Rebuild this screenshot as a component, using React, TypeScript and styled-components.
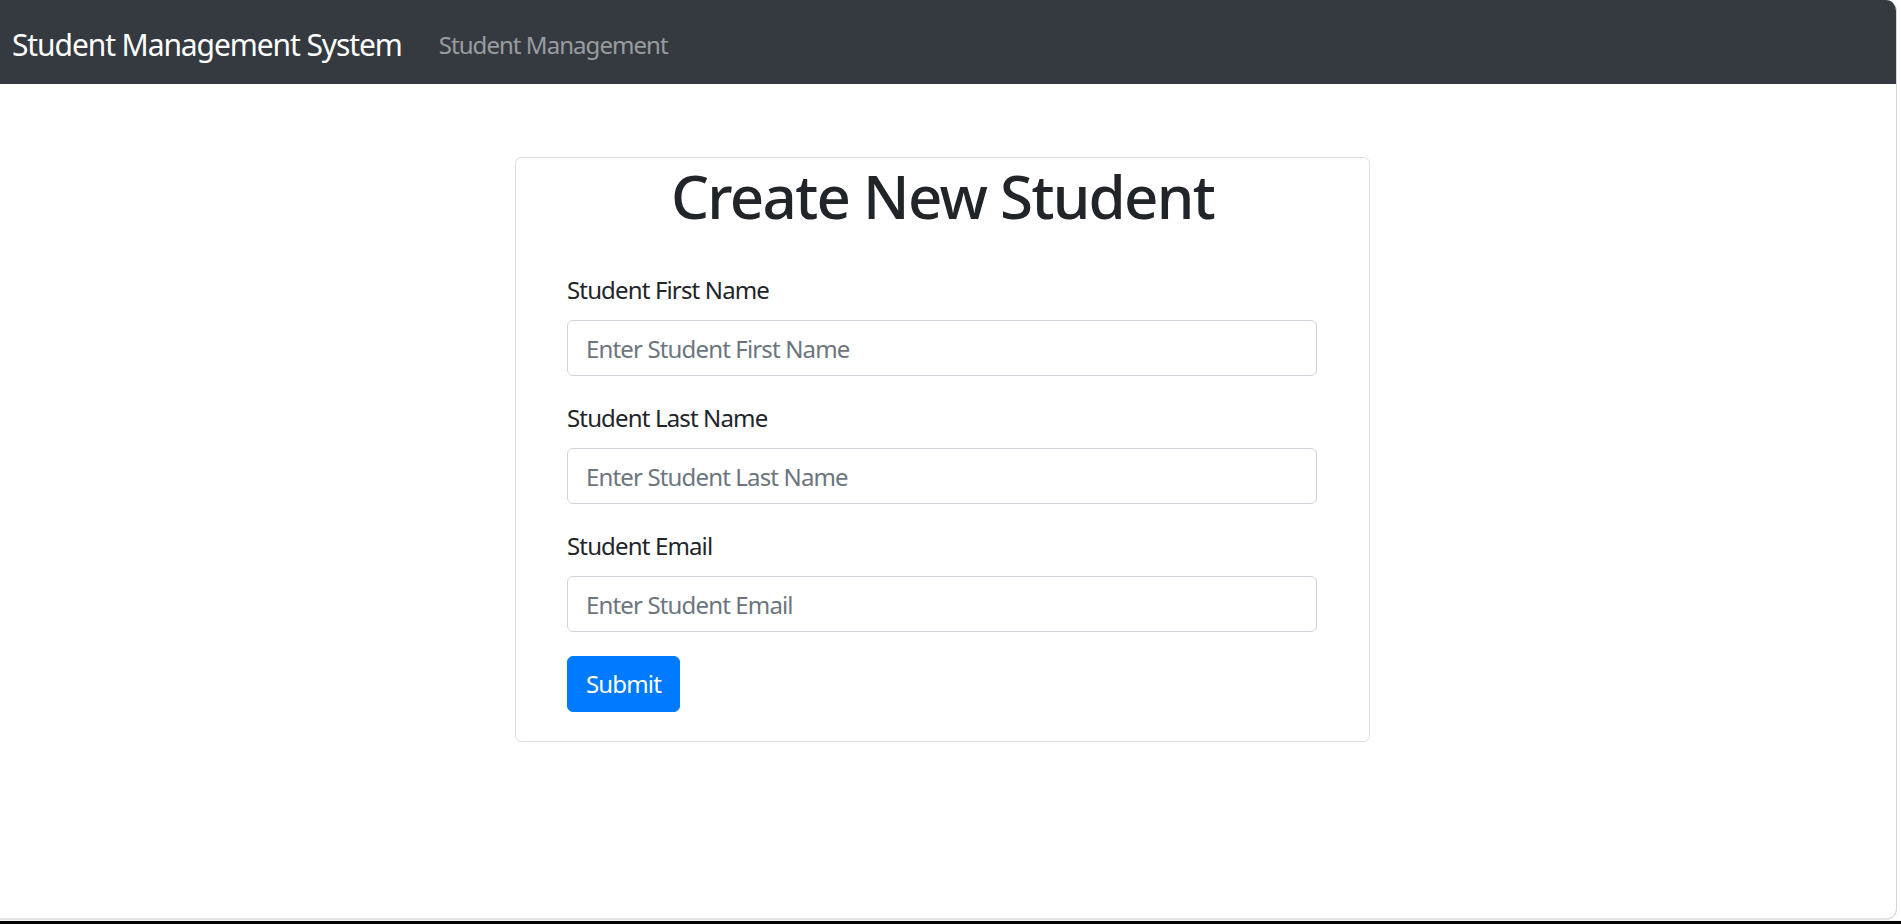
import React from "react";
import styled, { createGlobalStyle } from "styled-components";

const Global = createGlobalStyle`
  html, body { margin: 0; padding: 0; background: #ffffff; }
  body { font-family: "Segoe UI", "Noto Sans", "Liberation Sans", sans-serif; color: #212529; }
  * { box-sizing: border-box; }
`;

const Screen = styled.div`
  width: 1901px;
  height: 924px;
  display: flex;
  flex-direction: column;
  overflow: hidden;
  background: #ffffff;
`;

const Window = styled.div`
  width: 1897px;
  height: 920px;
  display: flex;
  flex-direction: column;
  border-right: 1px solid #d6d6d6;
  border-bottom: 2px solid #e2e2e2;
  border-radius: 0 11px 11px 0;
  overflow: hidden;
  background: #ffffff;
`;

const Taskbar = styled.div`
  height: 4px;
  background: linear-gradient(#f4f4f4 0 1px, #000000 1px);
`;

const Navbar = styled.nav`
  height: 84px;
  flex: none;
  background: #343a40;
  display: flex;
  align-items: center;
  padding: 5px 0 0 12px;
`;

const Brand = styled.a`
  font-size: 30px;
  line-height: 45px;
  color: #ffffff;
  margin-right: 37px;
  white-space: nowrap;
  letter-spacing: -1.1px;
`;

const NavLink = styled.a`
  font-size: 24px;
  line-height: 36px;
  color: rgba(255, 255, 255, 0.5);
  white-space: nowrap;
  letter-spacing: -0.95px;
`;

const Main = styled.main`
  padding: 73px 0 0 515px;
`;

const Card = styled.div`
  width: 855px;
  border: 1px solid rgba(0, 0, 0, 0.125);
  border-radius: 6px;
  display: flex;
  flex-direction: column;
`;

const Title = styled.h1`
  margin: 2px 0 12px;
  font-size: 60px;
  font-weight: 500;
  line-height: 72px;
  text-align: center;
  color: #212529;
  letter-spacing: -1.7px;
`;

const Body = styled.form`
  padding: 28px 51px 29px;
  display: flex;
  flex-direction: column;
`;

const Group = styled.div`
  display: flex;
  flex-direction: column;
  margin-bottom: 24px;
`;

const Label = styled.label`
  font-size: 24px;
  line-height: 36px;
  color: #212529;
  margin-bottom: 12px;
  letter-spacing: -0.85px;
`;

const Input = styled.input`
  width: 750px;
  height: 56px;
  padding: 9px 18px;
  font-family: inherit;
  font-size: 24px;
  line-height: 36px;
  color: #495057;
  background: #ffffff;
  border: 1px solid #ced4da;
  border-radius: 6px;
  outline: none;
  letter-spacing: -0.85px;
  &::placeholder { color: #6c757d; opacity: 1; }
`;

const Button = styled.button`
  align-self: flex-start;
  height: 56px;
  padding: 9px 18px;
  font-family: inherit;
  font-size: 24px;
  line-height: 36px;
  color: #ffffff;
  background: #007bff;
  border: 1px solid #007bff;
  border-radius: 6px;
  letter-spacing: -0.85px;
  cursor: pointer;
`;

const fields = [
  { label: "Student First Name", placeholder: "Enter Student First Name" },
  { label: "Student Last Name", placeholder: "Enter Student Last Name" },
  { label: "Student Email", placeholder: "Enter Student Email" },
];

export default function App() {
  return (
    <>
      <Global />
      <Screen>
        <Window>
          <Navbar>
            <Brand>Student Management System</Brand>
            <NavLink>Student Management</NavLink>
          </Navbar>
          <Main>
            <Card>
              <Title>Create New Student</Title>
              <Body onSubmit={(e) => e.preventDefault()}>
                {fields.map((f) => (
                  <Group key={f.label}>
                    <Label>{f.label}</Label>
                    <Input placeholder={f.placeholder} />
                  </Group>
                ))}
                <Button type="submit">Submit</Button>
              </Body>
            </Card>
          </Main>
        </Window>
        <Taskbar />
      </Screen>
    </>
  );
}
